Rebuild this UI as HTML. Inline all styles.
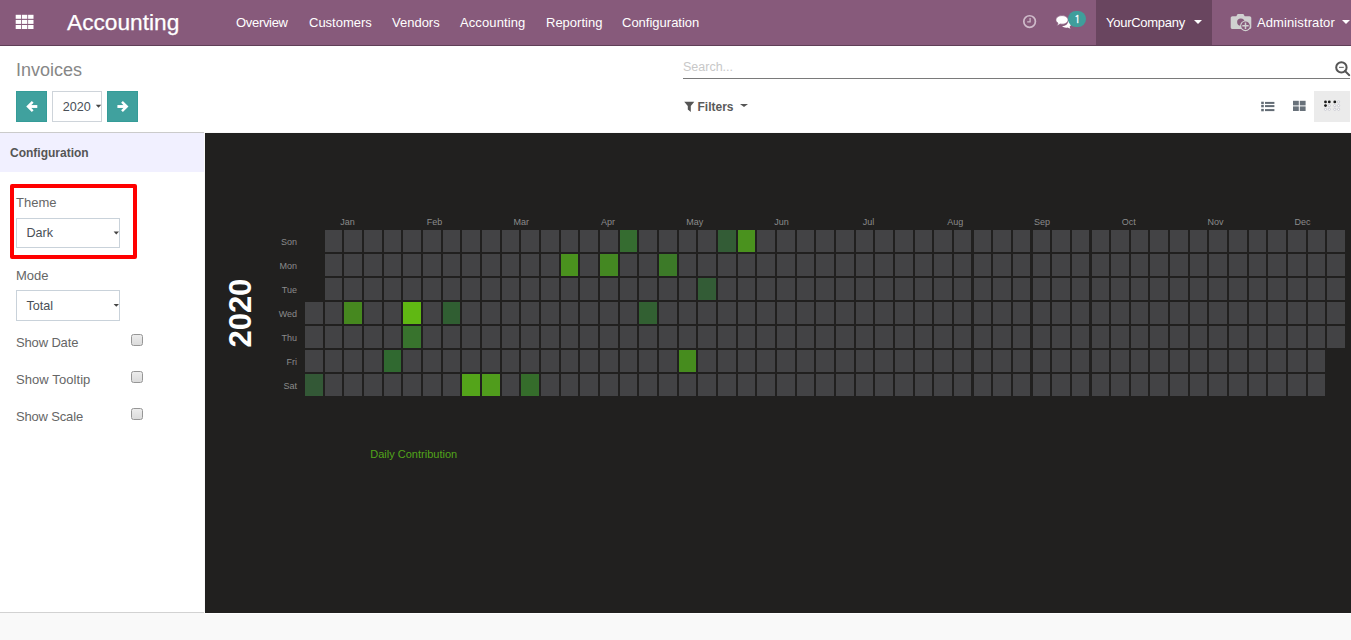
<!DOCTYPE html>
<html lang="en">
<head>
<meta charset="utf-8">
<title>Invoices - Accounting</title>
<style>
*{box-sizing:border-box;margin:0;padding:0}
html,body{width:1351px;height:640px;overflow:hidden;background:#f9f9f9;font-family:"Liberation Sans",sans-serif;font-size:13px;color:#4c4c4c}
.abs{position:absolute;white-space:nowrap}
#nav{position:absolute;left:0;top:0;width:1351px;height:46px;background:#875a7b;border-bottom:1px solid #5f3f57}
#nav .mi{position:absolute;top:0;height:45px;line-height:45px;color:#fff;font-size:13px;white-space:nowrap}
#brand{position:absolute;left:67px;top:0;height:45px;line-height:45px;color:#fff;font-size:22.7px;white-space:nowrap;-webkit-text-stroke:0.25px #fff}
#company{position:absolute;left:1096px;top:0;width:116px;height:45px;background:#69455f}
#cp{position:absolute;left:0;top:46px;width:1351px;height:86px;background:#fff}
.btnp{position:absolute;top:91px;width:31px;height:31px;background:#40a19e;border:1px solid #359c98}
#side{position:absolute;left:0;top:132px;width:204px;height:481px;background:#fff;border-top:1px solid #cbcbcb;border-bottom:1px solid #d2d2d2}
#sidehead{position:absolute;left:0;top:0;width:204px;height:39px;background:#f1f0ff}
#main{position:absolute;left:205px;top:133px;width:1146px;height:480px;background:#21201f}
.sel{position:absolute;left:16px;width:104px;height:30px;border:1px solid #c9d2da;background:#fff;font-size:12.600px;line-height:28px;padding-left:9.500px;color:#495057}
.lbl{position:absolute;left:16px;font-size:13px;line-height:16px;color:#666;white-space:nowrap}
.cb{position:absolute;left:131px;width:12px;height:12px;border:1px solid #969696;border-radius:2.500px;background:linear-gradient(#ececec,#dbdbdb)}
.car{position:absolute;width:0;height:0;border-left:3px solid transparent;border-right:3px solid transparent;border-top:3px solid #555}
</style>
</head>
<body>
<div id="nav">
  <svg class="abs" style="left:15px;top:14px" width="21" height="17" viewBox="0 0 21 17"><g fill="#fff"><rect x="0.70" y="0.80" width="5.400" height="4"/><rect x="6.90" y="0.80" width="5.400" height="4"/><rect x="13.10" y="0.80" width="5.400" height="4"/><rect x="0.70" y="5.90" width="5.400" height="4"/><rect x="6.90" y="5.90" width="5.400" height="4"/><rect x="13.10" y="5.90" width="5.400" height="4"/><rect x="0.70" y="11.00" width="5.400" height="4"/><rect x="6.90" y="11.00" width="5.400" height="4"/><rect x="13.10" y="11.00" width="5.400" height="4"/></g></svg>
  <div id="brand">Accounting</div>
  <div class="mi" style="left:236px;letter-spacing:-0.31px">Overview</div>
  <div class="mi" style="left:309px">Customers</div>
  <div class="mi" style="left:392px">Vendors</div>
  <div class="mi" style="left:460px;letter-spacing:0.1px">Accounting</div>
  <div class="mi" style="left:546px">Reporting</div>
  <div class="mi" style="left:622px">Configuration</div>
  <!-- clock -->
  <svg class="abs" style="left:1021px;top:13px" width="17" height="17" viewBox="0 0 17 17"><circle cx="8.600" cy="8.550" r="5.800" fill="none" stroke="#cfbbca" stroke-width="1.700"/><path d="M9.100 5V8.800H6.200" fill="none" stroke="#cfbbca" stroke-width="1.250"/></svg>
  <!-- comments -->
  <svg class="abs" style="left:1055px;top:14px" width="18" height="16" viewBox="0 0 18 16"><path fill="#fff" d="M13.200 6.800c1.800.6 3 1.900 3 3.300 0 1-.6 2-1.600 2.600.1.700.5 1.300 1 1.800-1-.1-2-.4-2.800-1-.5.100-1 .2-1.600.2-1.700 0-3.200-.6-4.100-1.600 3.300.100 6-1.900 6.100-5.300z"/><path fill="#fff" stroke="#875a7b" stroke-width=".7" d="M7 1.600c3.400 0 6.100 1.900 6.100 4.300s-2.700 4.300-6.100 4.300c-.6 0-1.300-.1-1.900-.2-.9.800-2.100 1.300-3.400 1.400.7-.7 1.200-1.500 1.300-2.300C1.700 8.300.9 7.200.9 5.900c0-2.400 2.700-4.300 6.100-4.300z"/></svg>
  <div class="abs" style="left:1068.200px;top:10.700px;width:18px;height:16.400px;border-radius:9px;background:#3f9e9b"></div>
  <div class="abs" style="left:1068.200px;top:10.700px;width:18px;height:16.400px;line-height:16.400px;text-align:center;color:#fff;font-size:10px;-webkit-text-stroke:0.35px #fff;font-family:'NanumGothic','Liberation Sans',sans-serif">1</div>
  <div id="company"></div>
  <div class="mi" style="left:1106px;letter-spacing:-0.27px">YourCompany</div>
  <div class="car" style="left:1194.200px;top:19.800px;border-top-color:#fff;border-left-width:4.100px;border-right-width:4.100px;border-top-width:4.400px"></div>
  <!-- camera avatar -->
  <svg class="abs" style="left:1230px;top:13px" width="22" height="20" viewBox="0 0 22 20"><path fill="#d0d0d0" d="M7.600 1.100h5.800l1.300 2.100h4.800c1 0 1.800.8 1.800 1.800v9.300c0 1-.8 1.800-1.800 1.800H2.500c-1 0-1.800-.8-1.800-1.800V5c0-1 .8-1.800 1.800-1.800h3.800z"/><circle cx="10.800" cy="9.100" r="3.700" fill="#875a7b"/><circle cx="15.500" cy="12.800" r="5.400" fill="#d0d0d0"/><circle cx="15.500" cy="12.800" r="4.300" fill="#875a7b"/><path d="M15.500 9.600v6.400M12.300 12.800h6.400" stroke="#d0d0d0" stroke-width="1.500"/></svg>
  <div class="mi" style="left:1257px;letter-spacing:0.1px">Administrator</div>
  <div class="car" style="left:1341.800px;top:19.800px;border-top-color:#fff;border-left-width:4.100px;border-right-width:4.100px;border-top-width:4.400px"></div>
</div>
<div id="cp">
  <div class="abs" style="left:16px;top:12px;font-size:18px;line-height:24px;color:#878787">Invoices</div>
</div>
<div class="abs" style="left:683px;top:58px;font-size:12.5px;line-height:18px;color:#c8c8c8">Search...</div>
<div class="abs" style="left:683px;top:78px;width:667px;height:1px;background:#7a7a7a"></div>
<!-- search minus -->
<svg class="abs" style="left:1334px;top:60px" width="17" height="17" viewBox="0 0 17 17"><circle cx="7.400" cy="7.400" r="5.200" fill="none" stroke="#555" stroke-width="2"/><path d="M11 11l4.300 4.200" stroke="#555" stroke-width="1.900" stroke-linecap="round"/><path d="M5 7.400h4.800" stroke="#777" stroke-width="1.200"/></svg>
<!-- filters -->
<svg class="abs" style="left:684px;top:101px" width="11" height="11" viewBox="0 0 11 11"><path fill="#555" d="M.2.800H10.300L6.800 5V10.900L3.800 8.600V5z"/></svg>
<div class="abs" style="left:697.500px;top:99px;font-size:12px;line-height:17px;font-weight:bold;color:#5a5a5a">Filters</div>
<div class="car" style="left:740.200px;top:104px;border-left-width:4px;border-right-width:4px;border-top-width:3.600px"></div>
<!-- view switcher -->
<div class="abs" style="left:1314px;top:91px;width:36px;height:31px;background:#ebebeb"></div>
<svg class="abs" style="left:1260px;top:100px" width="16" height="13" viewBox="0 0 16 13"><g fill="#626b74"><rect x="1.200" y="1.700" width="2.600" height="2.400"/><rect x="1.200" y="4.900" width="2.600" height="2.400"/><rect x="1.200" y="8.900" width="2.600" height="2.400"/><rect x="5" y="1.900" width="9.400" height="2"/><rect x="5" y="5.100" width="9.400" height="2"/><rect x="5" y="9.100" width="9.400" height="2"/></g></svg>
<svg class="abs" style="left:1293px;top:100px" width="14" height="12" viewBox="0 0 14 12"><g fill="#68717a"><rect x="0" y=".8" width="5.800" height="4.600"/><rect x="6.800" y=".8" width="5.800" height="4.600"/><rect x="0" y="6.400" width="5.800" height="4.600"/><rect x="6.800" y="6.400" width="5.800" height="4.600"/></g></svg>
<svg class="abs" style="left:1323px;top:100px" width="19" height="12" viewBox="0 0 19 12"><g fill="#1a1a1a"><circle cx="2.500" cy="1.900" r="1.400"/><circle cx="6.300" cy="1.900" r="1.400"/><circle cx="2.500" cy="5.600" r="1.400"/><circle cx="11.800" cy="1.900" r="1.400"/></g><g fill="#fff" stroke="#aab" stroke-width=".5"><circle cx="6.300" cy="5.600" r="1.100"/><circle cx="2.500" cy="9.300" r="1.100"/><circle cx="6.300" cy="9.300" r="1.100"/><circle cx="15.600" cy="1.900" r="1.100"/><circle cx="11.800" cy="5.600" r="1.100"/><circle cx="15.600" cy="5.600" r="1.100"/><circle cx="11.800" cy="9.300" r="1.100"/><circle cx="15.600" cy="9.300" r="1.100"/></g></svg>
<!-- year nav -->
<div class="btnp" style="left:16px"></div>
<svg class="abs" style="left:16px;top:91px" width="31" height="31" viewBox="16 91 31 31"><path d="M32.700 101.800L28 106.500l4.700 4.700" fill="none" stroke="#fff" stroke-width="2.500"/><path d="M28 106.500H37.300" stroke="#fff" stroke-width="2.900"/></svg>
<div class="btnp" style="left:107px"></div>
<svg class="abs" style="left:107px;top:91px" width="31" height="31" viewBox="107 91 31 31"><path d="M122 101.800l4.700 4.700l-4.700 4.700" fill="none" stroke="#fff" stroke-width="2.500"/><path d="M126.700 106.500H117.400" stroke="#fff" stroke-width="2.900"/></svg>
<div class="abs" style="left:52px;top:91px;width:50px;height:31px;border:1px solid #ced4da;background:#fff;line-height:31px;font-size:12.600px;color:#495057;padding-left:9.800px">2020</div>
<svg class="abs" style="left:93px;top:102px" width="12" height="10" viewBox="93 102 12 10"><path fill="#444" d="M95.80 104.80h5.40l-2.70 2.90z"/></svg>
<!-- sidebar -->
<div id="side">
  <div id="sidehead"></div>
  <div class="abs" style="left:10px;top:12px;font-size:12px;font-weight:bold;color:#555;line-height:16px">Configuration</div>
</div>
<div class="abs" style="left:10px;top:184px;width:127px;height:75px;border:4px solid #ff0000;border-radius:2px"></div>
<div class="lbl" style="top:195px">Theme</div>
<div class="sel" style="top:218px">Dark</div>
<svg class="abs" style="left:111px;top:229px" width="12" height="10" viewBox="111 229 12 10"><path fill="#444" d="M113.60 231.50h5.40l-2.70 2.90z"/></svg>
<div class="lbl" style="top:268px">Mode</div>
<div class="sel" style="top:290px;height:31px;line-height:30px">Total</div>
<svg class="abs" style="left:111px;top:301px" width="12" height="10" viewBox="111 301 12 10"><path fill="#444" d="M113.60 303.90h5.40l-2.70 2.90z"/></svg>
<div class="lbl" style="top:335px;letter-spacing:-0.15px">Show Date</div>
<div class="cb" style="top:334px"></div>
<div class="lbl" style="top:372px;letter-spacing:0.08px">Show Tooltip</div>
<div class="cb" style="top:371px"></div>
<div class="lbl" style="top:409px;letter-spacing:-0.17px">Show Scale</div>
<div class="cb" style="top:408px"></div>
<div id="main"></div>
<div class="abs" style="left:205px;top:613px;width:1146px;height:1px;background:#fff"></div>
<svg id="chart" class="abs" style="left:205px;top:133px" width="1146" height="480" viewBox="205 133 1146 480">
<g fill="#434345" shape-rendering="crispEdges">
<rect x="305" y="302" width="18" height="22"/>
<rect x="305" y="326" width="18" height="22"/>
<rect x="305" y="350" width="18" height="22"/>
<rect x="325" y="230" width="17" height="22"/>
<rect x="325" y="254" width="17" height="22"/>
<rect x="325" y="278" width="17" height="22"/>
<rect x="325" y="302" width="17" height="22"/>
<rect x="325" y="326" width="17" height="22"/>
<rect x="325" y="350" width="17" height="22"/>
<rect x="325" y="374" width="17" height="22"/>
<rect x="344" y="230" width="18" height="22"/>
<rect x="344" y="254" width="18" height="22"/>
<rect x="344" y="278" width="18" height="22"/>
<rect x="344" y="326" width="18" height="22"/>
<rect x="344" y="350" width="18" height="22"/>
<rect x="344" y="374" width="18" height="22"/>
<rect x="364" y="230" width="18" height="22"/>
<rect x="364" y="254" width="18" height="22"/>
<rect x="364" y="278" width="18" height="22"/>
<rect x="364" y="302" width="18" height="22"/>
<rect x="364" y="326" width="18" height="22"/>
<rect x="364" y="350" width="18" height="22"/>
<rect x="364" y="374" width="18" height="22"/>
<rect x="384" y="230" width="17" height="22"/>
<rect x="384" y="254" width="17" height="22"/>
<rect x="384" y="278" width="17" height="22"/>
<rect x="384" y="302" width="17" height="22"/>
<rect x="384" y="326" width="17" height="22"/>
<rect x="384" y="374" width="17" height="22"/>
<rect x="403" y="230" width="18" height="22"/>
<rect x="403" y="254" width="18" height="22"/>
<rect x="403" y="278" width="18" height="22"/>
<rect x="403" y="350" width="18" height="22"/>
<rect x="403" y="374" width="18" height="22"/>
<rect x="423" y="230" width="18" height="22"/>
<rect x="423" y="254" width="18" height="22"/>
<rect x="423" y="278" width="18" height="22"/>
<rect x="423" y="302" width="18" height="22"/>
<rect x="423" y="326" width="18" height="22"/>
<rect x="423" y="350" width="18" height="22"/>
<rect x="423" y="374" width="18" height="22"/>
<rect x="443" y="230" width="17" height="22"/>
<rect x="443" y="254" width="17" height="22"/>
<rect x="443" y="278" width="17" height="22"/>
<rect x="443" y="326" width="17" height="22"/>
<rect x="443" y="350" width="17" height="22"/>
<rect x="443" y="374" width="17" height="22"/>
<rect x="462" y="230" width="18" height="22"/>
<rect x="462" y="254" width="18" height="22"/>
<rect x="462" y="278" width="18" height="22"/>
<rect x="462" y="302" width="18" height="22"/>
<rect x="462" y="326" width="18" height="22"/>
<rect x="462" y="350" width="18" height="22"/>
<rect x="482" y="230" width="18" height="22"/>
<rect x="482" y="254" width="18" height="22"/>
<rect x="482" y="278" width="18" height="22"/>
<rect x="482" y="302" width="18" height="22"/>
<rect x="482" y="326" width="18" height="22"/>
<rect x="482" y="350" width="18" height="22"/>
<rect x="502" y="230" width="17" height="22"/>
<rect x="502" y="254" width="17" height="22"/>
<rect x="502" y="278" width="17" height="22"/>
<rect x="502" y="302" width="17" height="22"/>
<rect x="502" y="326" width="17" height="22"/>
<rect x="502" y="350" width="17" height="22"/>
<rect x="502" y="374" width="17" height="22"/>
<rect x="521" y="230" width="18" height="22"/>
<rect x="521" y="254" width="18" height="22"/>
<rect x="521" y="278" width="18" height="22"/>
<rect x="521" y="302" width="18" height="22"/>
<rect x="521" y="326" width="18" height="22"/>
<rect x="521" y="350" width="18" height="22"/>
<rect x="541" y="230" width="18" height="22"/>
<rect x="541" y="254" width="18" height="22"/>
<rect x="541" y="278" width="18" height="22"/>
<rect x="541" y="302" width="18" height="22"/>
<rect x="541" y="326" width="18" height="22"/>
<rect x="541" y="350" width="18" height="22"/>
<rect x="541" y="374" width="18" height="22"/>
<rect x="561" y="230" width="17" height="22"/>
<rect x="561" y="278" width="17" height="22"/>
<rect x="561" y="302" width="17" height="22"/>
<rect x="561" y="326" width="17" height="22"/>
<rect x="561" y="350" width="17" height="22"/>
<rect x="561" y="374" width="17" height="22"/>
<rect x="580" y="230" width="18" height="22"/>
<rect x="580" y="254" width="18" height="22"/>
<rect x="580" y="278" width="18" height="22"/>
<rect x="580" y="302" width="18" height="22"/>
<rect x="580" y="326" width="18" height="22"/>
<rect x="580" y="350" width="18" height="22"/>
<rect x="580" y="374" width="18" height="22"/>
<rect x="600" y="230" width="18" height="22"/>
<rect x="600" y="278" width="18" height="22"/>
<rect x="600" y="302" width="18" height="22"/>
<rect x="600" y="326" width="18" height="22"/>
<rect x="600" y="350" width="18" height="22"/>
<rect x="600" y="374" width="18" height="22"/>
<rect x="620" y="254" width="17" height="22"/>
<rect x="620" y="278" width="17" height="22"/>
<rect x="620" y="302" width="17" height="22"/>
<rect x="620" y="326" width="17" height="22"/>
<rect x="620" y="350" width="17" height="22"/>
<rect x="620" y="374" width="17" height="22"/>
<rect x="639" y="230" width="18" height="22"/>
<rect x="639" y="254" width="18" height="22"/>
<rect x="639" y="278" width="18" height="22"/>
<rect x="639" y="326" width="18" height="22"/>
<rect x="639" y="350" width="18" height="22"/>
<rect x="639" y="374" width="18" height="22"/>
<rect x="659" y="230" width="18" height="22"/>
<rect x="659" y="278" width="18" height="22"/>
<rect x="659" y="302" width="18" height="22"/>
<rect x="659" y="326" width="18" height="22"/>
<rect x="659" y="350" width="18" height="22"/>
<rect x="659" y="374" width="18" height="22"/>
<rect x="679" y="230" width="17" height="22"/>
<rect x="679" y="254" width="17" height="22"/>
<rect x="679" y="278" width="17" height="22"/>
<rect x="679" y="302" width="17" height="22"/>
<rect x="679" y="326" width="17" height="22"/>
<rect x="679" y="374" width="17" height="22"/>
<rect x="698" y="230" width="18" height="22"/>
<rect x="698" y="254" width="18" height="22"/>
<rect x="698" y="302" width="18" height="22"/>
<rect x="698" y="326" width="18" height="22"/>
<rect x="698" y="350" width="18" height="22"/>
<rect x="698" y="374" width="18" height="22"/>
<rect x="718" y="254" width="18" height="22"/>
<rect x="718" y="278" width="18" height="22"/>
<rect x="718" y="302" width="18" height="22"/>
<rect x="718" y="326" width="18" height="22"/>
<rect x="718" y="350" width="18" height="22"/>
<rect x="718" y="374" width="18" height="22"/>
<rect x="738" y="254" width="17" height="22"/>
<rect x="738" y="278" width="17" height="22"/>
<rect x="738" y="302" width="17" height="22"/>
<rect x="738" y="326" width="17" height="22"/>
<rect x="738" y="350" width="17" height="22"/>
<rect x="738" y="374" width="17" height="22"/>
<rect x="757" y="230" width="18" height="22"/>
<rect x="757" y="254" width="18" height="22"/>
<rect x="757" y="278" width="18" height="22"/>
<rect x="757" y="302" width="18" height="22"/>
<rect x="757" y="326" width="18" height="22"/>
<rect x="757" y="350" width="18" height="22"/>
<rect x="757" y="374" width="18" height="22"/>
<rect x="777" y="230" width="18" height="22"/>
<rect x="777" y="254" width="18" height="22"/>
<rect x="777" y="278" width="18" height="22"/>
<rect x="777" y="302" width="18" height="22"/>
<rect x="777" y="326" width="18" height="22"/>
<rect x="777" y="350" width="18" height="22"/>
<rect x="777" y="374" width="18" height="22"/>
<rect x="797" y="230" width="17" height="22"/>
<rect x="797" y="254" width="17" height="22"/>
<rect x="797" y="278" width="17" height="22"/>
<rect x="797" y="302" width="17" height="22"/>
<rect x="797" y="326" width="17" height="22"/>
<rect x="797" y="350" width="17" height="22"/>
<rect x="797" y="374" width="17" height="22"/>
<rect x="816" y="230" width="18" height="22"/>
<rect x="816" y="254" width="18" height="22"/>
<rect x="816" y="278" width="18" height="22"/>
<rect x="816" y="302" width="18" height="22"/>
<rect x="816" y="326" width="18" height="22"/>
<rect x="816" y="350" width="18" height="22"/>
<rect x="816" y="374" width="18" height="22"/>
<rect x="836" y="230" width="18" height="22"/>
<rect x="836" y="254" width="18" height="22"/>
<rect x="836" y="278" width="18" height="22"/>
<rect x="836" y="302" width="18" height="22"/>
<rect x="836" y="326" width="18" height="22"/>
<rect x="836" y="350" width="18" height="22"/>
<rect x="836" y="374" width="18" height="22"/>
<rect x="856" y="230" width="17" height="22"/>
<rect x="856" y="254" width="17" height="22"/>
<rect x="856" y="278" width="17" height="22"/>
<rect x="856" y="302" width="17" height="22"/>
<rect x="856" y="326" width="17" height="22"/>
<rect x="856" y="350" width="17" height="22"/>
<rect x="856" y="374" width="17" height="22"/>
<rect x="875" y="230" width="18" height="22"/>
<rect x="875" y="254" width="18" height="22"/>
<rect x="875" y="278" width="18" height="22"/>
<rect x="875" y="302" width="18" height="22"/>
<rect x="875" y="326" width="18" height="22"/>
<rect x="875" y="350" width="18" height="22"/>
<rect x="875" y="374" width="18" height="22"/>
<rect x="895" y="230" width="18" height="22"/>
<rect x="895" y="254" width="18" height="22"/>
<rect x="895" y="278" width="18" height="22"/>
<rect x="895" y="302" width="18" height="22"/>
<rect x="895" y="326" width="18" height="22"/>
<rect x="895" y="350" width="18" height="22"/>
<rect x="895" y="374" width="18" height="22"/>
<rect x="915" y="230" width="17" height="22"/>
<rect x="915" y="254" width="17" height="22"/>
<rect x="915" y="278" width="17" height="22"/>
<rect x="915" y="302" width="17" height="22"/>
<rect x="915" y="326" width="17" height="22"/>
<rect x="915" y="350" width="17" height="22"/>
<rect x="915" y="374" width="17" height="22"/>
<rect x="934" y="230" width="18" height="22"/>
<rect x="934" y="254" width="18" height="22"/>
<rect x="934" y="278" width="18" height="22"/>
<rect x="934" y="302" width="18" height="22"/>
<rect x="934" y="326" width="18" height="22"/>
<rect x="934" y="350" width="18" height="22"/>
<rect x="934" y="374" width="18" height="22"/>
<rect x="954" y="230" width="17" height="22"/>
<rect x="954" y="254" width="17" height="22"/>
<rect x="954" y="278" width="17" height="22"/>
<rect x="954" y="302" width="17" height="22"/>
<rect x="954" y="326" width="17" height="22"/>
<rect x="954" y="350" width="17" height="22"/>
<rect x="954" y="374" width="17" height="22"/>
<rect x="974" y="230" width="17" height="22"/>
<rect x="974" y="254" width="17" height="22"/>
<rect x="974" y="278" width="17" height="22"/>
<rect x="974" y="302" width="17" height="22"/>
<rect x="974" y="326" width="17" height="22"/>
<rect x="974" y="350" width="17" height="22"/>
<rect x="974" y="374" width="17" height="22"/>
<rect x="993" y="230" width="18" height="22"/>
<rect x="993" y="254" width="18" height="22"/>
<rect x="993" y="278" width="18" height="22"/>
<rect x="993" y="302" width="18" height="22"/>
<rect x="993" y="326" width="18" height="22"/>
<rect x="993" y="350" width="18" height="22"/>
<rect x="993" y="374" width="18" height="22"/>
<rect x="1013" y="230" width="17" height="22"/>
<rect x="1013" y="254" width="17" height="22"/>
<rect x="1013" y="278" width="17" height="22"/>
<rect x="1013" y="302" width="17" height="22"/>
<rect x="1013" y="326" width="17" height="22"/>
<rect x="1013" y="350" width="17" height="22"/>
<rect x="1013" y="374" width="17" height="22"/>
<rect x="1033" y="230" width="17" height="22"/>
<rect x="1033" y="254" width="17" height="22"/>
<rect x="1033" y="278" width="17" height="22"/>
<rect x="1033" y="302" width="17" height="22"/>
<rect x="1033" y="326" width="17" height="22"/>
<rect x="1033" y="350" width="17" height="22"/>
<rect x="1033" y="374" width="17" height="22"/>
<rect x="1052" y="230" width="18" height="22"/>
<rect x="1052" y="254" width="18" height="22"/>
<rect x="1052" y="278" width="18" height="22"/>
<rect x="1052" y="302" width="18" height="22"/>
<rect x="1052" y="326" width="18" height="22"/>
<rect x="1052" y="350" width="18" height="22"/>
<rect x="1052" y="374" width="18" height="22"/>
<rect x="1072" y="230" width="17" height="22"/>
<rect x="1072" y="254" width="17" height="22"/>
<rect x="1072" y="278" width="17" height="22"/>
<rect x="1072" y="302" width="17" height="22"/>
<rect x="1072" y="326" width="17" height="22"/>
<rect x="1072" y="350" width="17" height="22"/>
<rect x="1072" y="374" width="17" height="22"/>
<rect x="1092" y="230" width="17" height="22"/>
<rect x="1092" y="254" width="17" height="22"/>
<rect x="1092" y="278" width="17" height="22"/>
<rect x="1092" y="302" width="17" height="22"/>
<rect x="1092" y="326" width="17" height="22"/>
<rect x="1092" y="350" width="17" height="22"/>
<rect x="1092" y="374" width="17" height="22"/>
<rect x="1111" y="230" width="18" height="22"/>
<rect x="1111" y="254" width="18" height="22"/>
<rect x="1111" y="278" width="18" height="22"/>
<rect x="1111" y="302" width="18" height="22"/>
<rect x="1111" y="326" width="18" height="22"/>
<rect x="1111" y="350" width="18" height="22"/>
<rect x="1111" y="374" width="18" height="22"/>
<rect x="1131" y="230" width="17" height="22"/>
<rect x="1131" y="254" width="17" height="22"/>
<rect x="1131" y="278" width="17" height="22"/>
<rect x="1131" y="302" width="17" height="22"/>
<rect x="1131" y="326" width="17" height="22"/>
<rect x="1131" y="350" width="17" height="22"/>
<rect x="1131" y="374" width="17" height="22"/>
<rect x="1150" y="230" width="18" height="22"/>
<rect x="1150" y="254" width="18" height="22"/>
<rect x="1150" y="278" width="18" height="22"/>
<rect x="1150" y="302" width="18" height="22"/>
<rect x="1150" y="326" width="18" height="22"/>
<rect x="1150" y="350" width="18" height="22"/>
<rect x="1150" y="374" width="18" height="22"/>
<rect x="1170" y="230" width="18" height="22"/>
<rect x="1170" y="254" width="18" height="22"/>
<rect x="1170" y="278" width="18" height="22"/>
<rect x="1170" y="302" width="18" height="22"/>
<rect x="1170" y="326" width="18" height="22"/>
<rect x="1170" y="350" width="18" height="22"/>
<rect x="1170" y="374" width="18" height="22"/>
<rect x="1190" y="230" width="17" height="22"/>
<rect x="1190" y="254" width="17" height="22"/>
<rect x="1190" y="278" width="17" height="22"/>
<rect x="1190" y="302" width="17" height="22"/>
<rect x="1190" y="326" width="17" height="22"/>
<rect x="1190" y="350" width="17" height="22"/>
<rect x="1190" y="374" width="17" height="22"/>
<rect x="1209" y="230" width="18" height="22"/>
<rect x="1209" y="254" width="18" height="22"/>
<rect x="1209" y="278" width="18" height="22"/>
<rect x="1209" y="302" width="18" height="22"/>
<rect x="1209" y="326" width="18" height="22"/>
<rect x="1209" y="350" width="18" height="22"/>
<rect x="1209" y="374" width="18" height="22"/>
<rect x="1229" y="230" width="18" height="22"/>
<rect x="1229" y="254" width="18" height="22"/>
<rect x="1229" y="278" width="18" height="22"/>
<rect x="1229" y="302" width="18" height="22"/>
<rect x="1229" y="326" width="18" height="22"/>
<rect x="1229" y="350" width="18" height="22"/>
<rect x="1229" y="374" width="18" height="22"/>
<rect x="1249" y="230" width="17" height="22"/>
<rect x="1249" y="254" width="17" height="22"/>
<rect x="1249" y="278" width="17" height="22"/>
<rect x="1249" y="302" width="17" height="22"/>
<rect x="1249" y="326" width="17" height="22"/>
<rect x="1249" y="350" width="17" height="22"/>
<rect x="1249" y="374" width="17" height="22"/>
<rect x="1268" y="230" width="18" height="22"/>
<rect x="1268" y="254" width="18" height="22"/>
<rect x="1268" y="278" width="18" height="22"/>
<rect x="1268" y="302" width="18" height="22"/>
<rect x="1268" y="326" width="18" height="22"/>
<rect x="1268" y="350" width="18" height="22"/>
<rect x="1268" y="374" width="18" height="22"/>
<rect x="1288" y="230" width="18" height="22"/>
<rect x="1288" y="254" width="18" height="22"/>
<rect x="1288" y="278" width="18" height="22"/>
<rect x="1288" y="302" width="18" height="22"/>
<rect x="1288" y="326" width="18" height="22"/>
<rect x="1288" y="350" width="18" height="22"/>
<rect x="1288" y="374" width="18" height="22"/>
<rect x="1308" y="230" width="17" height="22"/>
<rect x="1308" y="254" width="17" height="22"/>
<rect x="1308" y="278" width="17" height="22"/>
<rect x="1308" y="302" width="17" height="22"/>
<rect x="1308" y="326" width="17" height="22"/>
<rect x="1308" y="350" width="17" height="22"/>
<rect x="1308" y="374" width="17" height="22"/>
<rect x="1327" y="230" width="18" height="22"/>
<rect x="1327" y="254" width="18" height="22"/>
<rect x="1327" y="278" width="18" height="22"/>
<rect x="1327" y="302" width="18" height="22"/>
<rect x="1327" y="326" width="18" height="22"/>
</g>
<rect x="305" y="374" width="18" height="22" fill="#335836"/>
<rect x="344" y="302" width="18" height="22" fill="#46881f"/>
<rect x="384" y="350" width="17" height="22" fill="#306930"/>
<rect x="403" y="302" width="18" height="22" fill="#60b813"/>
<rect x="403" y="326" width="18" height="22" fill="#38732d"/>
<rect x="443" y="302" width="17" height="22" fill="#305e32"/>
<rect x="462" y="374" width="18" height="22" fill="#54a41a"/>
<rect x="482" y="374" width="18" height="22" fill="#509c1c"/>
<rect x="521" y="374" width="18" height="22" fill="#356c2b"/>
<rect x="561" y="254" width="17" height="22" fill="#4a921e"/>
<rect x="600" y="254" width="18" height="22" fill="#448822"/>
<rect x="620" y="230" width="17" height="22" fill="#356c30"/>
<rect x="639" y="302" width="18" height="22" fill="#326032"/>
<rect x="659" y="254" width="18" height="22" fill="#3c7a28"/>
<rect x="679" y="350" width="17" height="22" fill="#468c1e"/>
<rect x="698" y="278" width="18" height="22" fill="#335c36"/>
<rect x="718" y="230" width="18" height="22" fill="#335c36"/>
<rect x="738" y="230" width="17" height="22" fill="#4a921e"/>
<g font-family="Liberation Sans, sans-serif" font-size="9" fill="#8b8b8b" text-anchor="middle"><text x="347.60" y="225">Jan</text><text x="434.40" y="225">Feb</text><text x="521.20" y="225">Mar</text><text x="608.00" y="225">Apr</text><text x="694.80" y="225">May</text><text x="781.60" y="225">Jun</text><text x="868.40" y="225">Jul</text><text x="955.20" y="225">Aug</text><text x="1042.00" y="225">Sep</text><text x="1128.80" y="225">Oct</text><text x="1215.60" y="225">Nov</text><text x="1302.40" y="225">Dec</text></g>
<g font-family="Liberation Sans, sans-serif" font-size="9" fill="#8b8b8b" text-anchor="end"><text x="297" y="245">Son</text><text x="297" y="269">Mon</text><text x="297" y="293">Tue</text><text x="297" y="317">Wed</text><text x="297" y="341">Thu</text><text x="297" y="365">Fri</text><text x="297" y="389">Sat</text></g>
<text transform="translate(251 347.6) rotate(-90)" font-family="Liberation Sans, sans-serif" font-size="31" font-weight="bold" fill="#fff">2020</text>
<text x="370.3" y="458" font-family="Liberation Sans, sans-serif" font-size="11" fill="#52a41a">Daily Contribution</text>
</svg>
</body>
</html>
